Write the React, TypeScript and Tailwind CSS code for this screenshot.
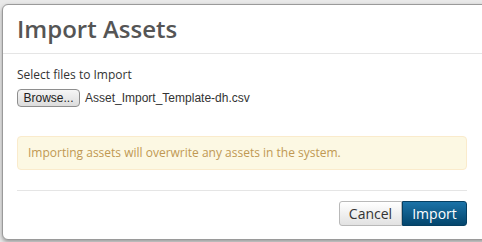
export default function App() {
  return (
    <div className="h-[242px] w-[482px] overflow-hidden bg-[#e9e9e9] pl-[2px] pt-[4px]" style={{ fontFamily: '"Open Sans", sans-serif' }}>
      <div className="flex h-[236px] w-[486px] flex-col rounded-[6px] border border-[#9a9a9a] bg-white shadow-[0_2px_4px_rgba(0,0,0,0.35)]">
        {/* Header */}
        <div className="h-[49px] shrink-0 border-b border-[#e5e5e5] px-[14px] pt-[7px]">
          <h1 className="text-[24px] font-semibold leading-[34px] text-[#555]">Import Assets</h1>
        </div>

        {/* Body */}
        <div className="w-[478px] px-[14px] pt-[12px]">
          <p className="text-[12px] leading-[18px] text-[#333]">Select files to Import</p>
          <div className="mt-[5px] flex items-center gap-[5px]" style={{ fontFamily: '"Liberation Sans", Arial, sans-serif' }}>
            <button className="h-[18px] w-[63px] rounded-[4px] border border-[#8e8e8e] bg-gradient-to-b from-[#f6f6f6] to-[#dcdcdc] text-[12px] leading-[16px] text-[#222]">
              Browse...
            </button>
            <span className="text-[12px] text-[#333]">Asset_Import_Template-dh.csv</span>
          </div>

          <div className="mt-[29px] flex h-[34px] items-center rounded-[4px] border border-[#faebcc] bg-[#fcf8e3] px-[10px] text-[12px] text-[#c09853]">
            Importing assets will overwrite any assets in the system.
          </div>

          <div className="mt-[20px] border-t border-[#e5e5e5]" />

          <div className="mt-[10px] flex justify-end">
            <button className="h-[25px] w-[63px] rounded-l-[3px] border border-[#b9b9b9] bg-gradient-to-b from-[#ffffff] to-[#e2e2e2] text-[14px] leading-[22px] text-[#333]">
              Cancel
            </button>
            <button className="h-[25px] w-[65px] rounded-r-[3px] border border-[#053f62] bg-gradient-to-b from-[#1b73a8] to-[#04466d] text-[14px] leading-[22px] text-white">
              Import
            </button>
          </div>
        </div>
      </div>
    </div>
  )
}
